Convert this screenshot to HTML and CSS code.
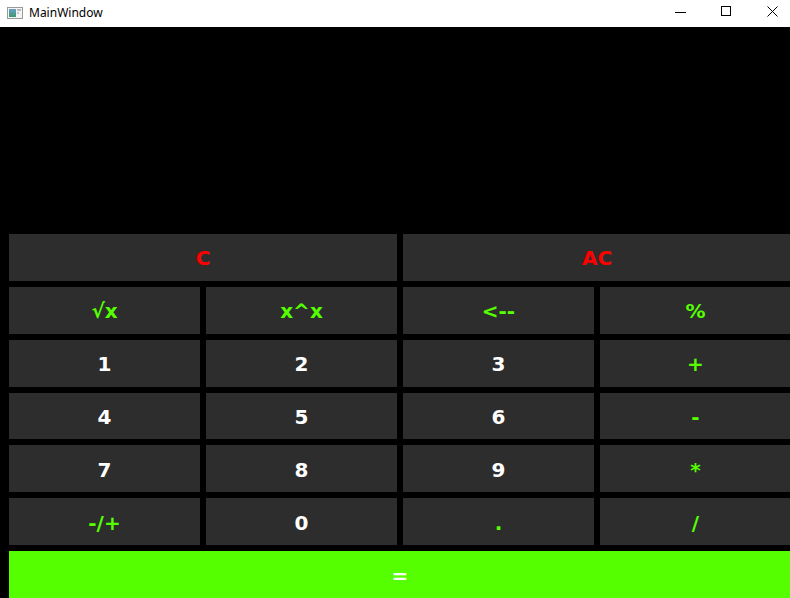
FILE: index.html
```html
<!DOCTYPE html>
<html>
<head>
<meta charset="utf-8">
<title>MainWindow</title>
<link rel="stylesheet" href="styles.css">
</head>
<body>
<div class="window">
  <div class="titlebar">
    <svg class="appicon" width="16" height="14" viewBox="0 0 16 14">
      <defs>
        <linearGradient id="g" x1="0" y1="0" x2="0" y2="1">
          <stop offset="0" stop-color="#6aa0c8"/>
          <stop offset="1" stop-color="#3a9a6a"/>
        </linearGradient>
      </defs>
      <rect x="0.5" y="1.5" width="15" height="11" fill="#f4f4f4" stroke="#9a9a9a"/>
      <rect x="2" y="3" width="7" height="8" fill="url(#g)"/>
      <rect x="10" y="3" width="4" height="2" fill="#b8b8b8"/>
      <rect x="10" y="6" width="2" height="2" fill="#c8c8c8"/>
    </svg>
    <span class="title">MainWindow</span>
    <div class="controls">
      <svg class="ctl" width="46" height="26" viewBox="0 0 46 26"><line x1="21" y1="12.5" x2="32" y2="12.5" stroke="#000" stroke-width="1"/></svg>
      <svg class="ctl" width="46" height="26" viewBox="0 0 46 26"><rect x="21.5" y="6.5" width="9" height="9" fill="none" stroke="#000" stroke-width="1"/></svg>
      <svg class="ctl" width="46" height="26" viewBox="0 0 46 26"><path d="M21.5 6.5 L31.5 16.5 M31.5 6.5 L21.5 16.5" stroke="#000" stroke-width="1" fill="none"/></svg>
    </div>
  </div>
  <div class="main">
    <div class="pad">
      <button class="btn red span2">C</button>
      <button class="btn red span2">AC</button>
      <button class="btn green">√x</button>
      <button class="btn green">x^x</button>
      <button class="btn green">&lt;--</button>
      <button class="btn green">%</button>
      <button class="btn white">1</button>
      <button class="btn white">2</button>
      <button class="btn white">3</button>
      <button class="btn green">+</button>
      <button class="btn white">4</button>
      <button class="btn white">5</button>
      <button class="btn white">6</button>
      <button class="btn green">-</button>
      <button class="btn white">7</button>
      <button class="btn white">8</button>
      <button class="btn white">9</button>
      <button class="btn green">*</button>
      <button class="btn green">-/+</button>
      <button class="btn white">0</button>
      <button class="btn green">.</button>
      <button class="btn green">/</button>
      <button class="btn equals span4">=</button>
    </div>
  </div>
</div>
</body>
</html>
```

FILE: styles.css
```css
html, body {
  margin: 0;
  padding: 0;
  width: 790px;
  height: 598px;
  overflow: hidden;
  background: #000;
}

.window {
  width: 790px;
  height: 598px;
  display: flex;
  flex-direction: column;
}

.titlebar {
  height: 27px;
  flex: none;
  background: #fff;
  display: flex;
  align-items: center;
  font-family: "Noto Sans", "Open Sans", sans-serif;
  font-size: 12px;
  color: #000;
}

.appicon {
  margin-left: 7px;
  margin-top: -2px;
}

.title {
  margin-left: 6px;
  margin-top: -2px;
}

.controls {
  margin-left: auto;
  display: flex;
  align-self: flex-start;
  margin-right: -2px;
}

.ctl {
  display: block;
}

.main {
  flex: 1;
  background: #000;
  padding: 207px 0 0 9px;
  overflow: hidden;
}

.pad {
  width: 782px;
  height: 364px;
  display: grid;
  grid-template-columns: repeat(4, 191px);
  grid-template-rows: repeat(7, 1fr);
  gap: 6px;
}

.btn {
  border: none;
  margin: 0;
  padding: 2px 0 0 0;
  background: #2d2d2d;
  font-family: "DejaVu Sans", Verdana, sans-serif;
  font-weight: bold;
  font-size: 20px;
  display: flex;
  align-items: center;
  justify-content: center;
}

.span2 { grid-column: span 2; }
.span4 { grid-column: span 4; }

.red { color: #ff0000; }
.green { color: #55ff00; }
.white { color: #ffffff; }

.equals {
  background: #55ff00;
  color: #ffffff;
}
```
